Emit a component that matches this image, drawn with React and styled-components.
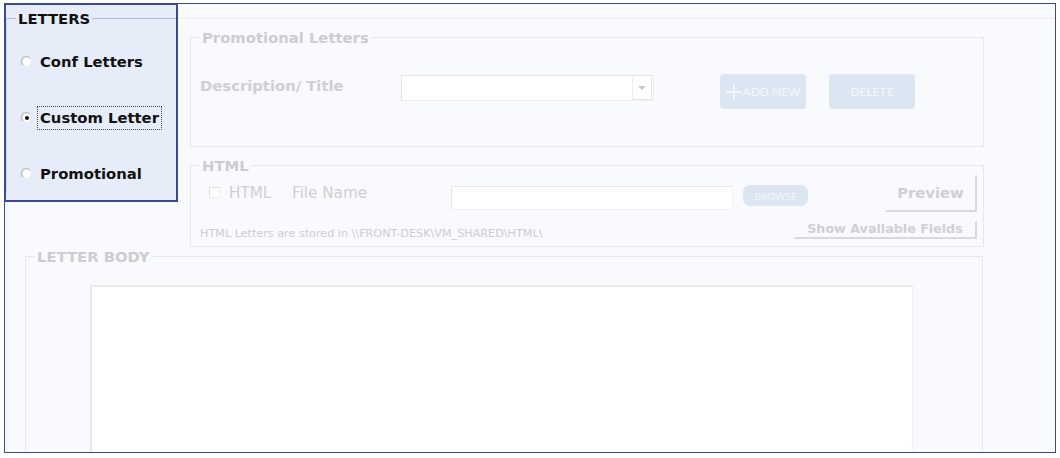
import React from "react";
import styled, { createGlobalStyle } from "styled-components";

const GlobalStyle = createGlobalStyle`
  body {
    margin: 0;
    background: #ffffff;
    font-family: "DejaVu Sans", Verdana, sans-serif;
  }
`;

const Frame = styled.div`
  position: relative;
  box-sizing: border-box;
  margin: 3px 0 0 4px;
  width: 1052px;
  height: 450px;
  border: 1px solid #3b4a8a;
  background: #f8fafd;
  overflow: hidden;
`;

const Outer = styled.div`
  margin: 14px 0 0 2px;
  height: 100%;
  border-top: 1px solid #e9eef6;
  border-left: 1px solid #eef2f8;
  display: flex;
  flex-direction: column;
`;

const TopArea = styled.div`
  padding-left: 182px;
  padding-top: 11px;
  display: flex;
  flex-direction: column;
  gap: 11px;
`;

const Box = styled.fieldset`
  box-sizing: border-box;
  margin: 0;
  min-width: 0;
  width: ${p => p.$w}px;
  height: ${p => p.$h}px;
  padding: 0 6px 0 9px;
  border: 1px solid #e3e9f2;
  border-radius: 0;
`;

const Legend = styled.legend`
  padding: 0 2px;
  font: bold 14.8px/15px "DejaVu Sans", Verdana, sans-serif;
  color: ${p => (p.$dark ? "#111111" : "#cccdcf")};
`;

const Row = styled.div`
  display: flex;
  align-items: flex-start;
  padding-top: ${p => p.$top || 0}px;
`;

const FieldLabel = styled.div`
  width: ${p => p.$w}px;
  margin-top: ${p => p.$mt || 0}px;
  margin-left: ${p => p.$ml || 0}px;
  flex: none;
  font: ${p => (p.$bold ? "bold 14.8px" : "normal 15.2px")}/15px "DejaVu Sans", Verdana, sans-serif;
  color: #cfd0d2;
  white-space: nowrap;
`;

const Select = styled.div`
  box-sizing: border-box;
  width: 253px;
  height: 26px;
  margin-top: 1px;
  background: #ffffff;
  border: 1px solid #f0f0f0;
  border-top-color: #e2e2e2;
  border-left-color: #e2e2e2;
  display: flex;
  justify-content: flex-end;
`;

const SelectArrow = styled.div`
  width: 18px;
  height: 22px;
  margin: 1px;
  border-left: 1px solid #ececec;
  border-right: 1px solid #e4e4e4;
  border-bottom: 1px solid #e4e4e4;
  display: flex;
  align-items: center;
  justify-content: center;
  &::after {
    content: "";
    border-left: 4px solid transparent;
    border-right: 4px solid transparent;
    border-top: 4px solid #c8c8c8;
  }
`;

const FlatButton = styled.div`
  box-sizing: border-box;
  flex: none;
  width: ${p => p.$w}px;
  height: ${p => p.$h}px;
  margin-left: ${p => p.$ml}px;
  margin-top: ${p => p.$mt || 0}px;
  border-radius: ${p => p.$r || 4}px;
  background: #dce6f2;
  color: #f3f6fb;
  font: ${p => p.$fs || 12}px/1 Lato, "Open Sans", sans-serif;
  display: flex;
  align-items: center;
  justify-content: center;
  gap: 1px;
`;

const Check = styled.div`
  box-sizing: border-box;
  width: 11px;
  height: 11px;
  margin: 12px 0 0 9px;
  flex: none;
  background: #ffffff;
  border: 1px solid #eeeeee;
  border-top-color: #e0e0e0;
  border-left-color: #e0e0e0;
`;

const FileInput = styled.div`
  box-sizing: border-box;
  width: 282px;
  height: 24px;
  margin-top: 11px;
  flex: none;
  background: #ffffff;
  border: 1px solid #f1f1f1;
  border-top-color: #e6e6e6;
  border-left-color: #e6e6e6;
`;

const RaisedButton = styled.div`
  box-sizing: border-box;
  width: ${p => p.$w}px;
  height: ${p => p.$h}px;
  margin-left: auto;
  flex: none;
  border-top: 1px solid #fbfbfb;
  border-left: 1px solid #fbfbfb;
  border-right: 2px solid #d8d9db;
  border-bottom: 2px solid #d8d9db;
  font: bold ${p => p.$fs}px/1 "DejaVu Sans", Verdana, sans-serif;
  color: #cfd0d3;
  display: flex;
  align-items: center;
  justify-content: center;
`;

const Note = styled.div`
  font: 11.2px/1 "DejaVu Sans", Verdana, sans-serif;
  color: #cdced1;
  margin-top: 7px;
  white-space: nowrap;
`;

const BodyBox = styled(Box)`
  margin: 2px 0 0 17px;
  padding: 0;
  flex: 1;
  height: auto;
  border-bottom: none;
`;

const BodyLegend = styled(Legend)`
  margin-left: 9px;
`;

const TextArea = styled.div`
  width: 820px;
  height: 220px;
  margin: 21px 0 0 64px;
  background: #ffffff;
  border-top: 2px solid #e8e8e9;
  border-left: 2px solid #e8e8e9;
  border-right: 1px solid #eef1f5;
`;

/* highlighted panel sits over the faded form */
const Panel = styled.div`
  position: absolute;
  left: -1px;
  top: -1px;
  box-sizing: border-box;
  width: 174px;
  height: 199px;
  border: 2px solid #3a4c8c;
  background: #e6edf8;
  padding: 6px 0 0 0;
`;

const PanelBox = styled.fieldset`
  margin: 0;
  min-width: 0;
  padding: 24px 0 0 9px;
  border: none;
  border-top: 1px solid #aebfdd;
  border-left: 1px solid #cdd8ec;
  height: 180px;
  box-sizing: border-box;
  display: flex;
  flex-direction: column;
  gap: 32px;
`;

const RadioRow = styled.div`
  display: flex;
  align-items: center;
  height: 24px;
`;

const Radio = styled.span`
  box-sizing: border-box;
  width: 11px;
  height: 11px;
  margin-left: 5px;
  margin-top: -1px;
  border-radius: 50%;
  flex: none;
  background: radial-gradient(circle at 60% 60%, #ffffff 45%, #f1f1f1 70%);
  border: 1px solid #b4b4b4;
  border-right-color: #e8e8e8;
  border-bottom-color: #e8e8e8;
  display: flex;
  align-items: center;
  justify-content: center;
  &::after {
    content: "";
    width: 4px;
    height: 4px;
    border-radius: 50%;
    background: ${p => (p.$on ? "#111111" : "transparent")};
  }
`;

const RadioLabel = styled.span`
  box-sizing: border-box;
  height: 24px;
  margin-left: 5px;
  padding: 0 2px;
  border: 1px dotted ${p => (p.$focus ? "#444444" : "transparent")};
  font: bold 14.8px/22px "DejaVu Sans", Verdana, sans-serif;
  color: #111111;
  white-space: nowrap;
`;

function PlusIcon() {
  return (
    <svg width="16" height="16" viewBox="0 0 16 16">
      <path d="M8 0.5V15.5M0.5 8H15.5" stroke="#f3f6fb" strokeWidth="1.8" fill="none" />
    </svg>
  );
}

const options = [
  { label: "Conf Letters" },
  { label: "Custom Letter", on: true },
  { label: "Promotional" },
];

export default function App() {
  return (
    <>
      <GlobalStyle />
      <Frame>
        <Outer>
          <TopArea>
            <Box $w={794} $h={117}>
              <Legend>Promotional Letters</Legend>
              <Row $top={29}>
                <FieldLabel $w={201} $mt={4} $bold>Description/ Title</FieldLabel>
                <Select>
                  <SelectArrow />
                </Select>
                <FlatButton $w={86} $h={35} $ml={66}>
                  <PlusIcon />
                  ADD NEW
                </FlatButton>
                <FlatButton $w={86} $h={35} $ml={23}>DELETE</FlatButton>
              </Row>
            </Box>
            <Box $w={794} $h={89}>
              <Legend>HTML</Legend>
              <Row $top={2}>
                <Check />
                <FieldLabel $w={63} $mt={11} $ml={9}>HTML</FieldLabel>
                <FieldLabel $w={159} $mt={11}>File Name</FieldLabel>
                <FileInput />
                <FlatButton $w={65} $h={21} $ml={10} $mt={10} $r={7} $fs={10}>BROWSE</FlatButton>
                <RaisedButton $w={92} $h={37} $fs={14.8}>Preview</RaisedButton>
              </Row>
              <Row $top={9}>
                <Note>HTML Letters are stored in \\FRONT-DESK\VM_SHARED\HTML\</Note>
                <RaisedButton $w={183} $h={18} $fs={12.7}>Show Available Fields</RaisedButton>
              </Row>
            </Box>
          </TopArea>
          <BodyBox $w={958}>
            <BodyLegend>LETTER BODY</BodyLegend>
            <TextArea />
          </BodyBox>
        </Outer>
        <Panel>
          <PanelBox>
            <Legend $dark>LETTERS</Legend>
            {options.map(o => (
              <RadioRow key={o.label}>
                <Radio $on={o.on} />
                <RadioLabel $focus={o.on}>{o.label}</RadioLabel>
              </RadioRow>
            ))}
          </PanelBox>
        </Panel>
      </Frame>
    </>
  );
}
